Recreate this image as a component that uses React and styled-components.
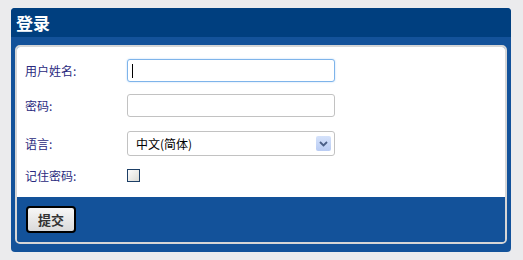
import React from "react";
import styled, { createGlobalStyle } from "styled-components";

const GlobalStyle = createGlobalStyle`
    body {
        margin: 0;
        background-color: #ebebed;
        font-family: "Liberation Sans", "Noto Sans CJK SC", sans-serif;
    }
`;

const Panel = styled.div`
    width: 500px;
    margin: 8px 0 0 11px;
    border-radius: 4px;
    overflow: hidden;
    background-color: #13529a;
`;

const Header = styled.div`
    height: 29px;
    padding-left: 5px;

    display: flex;
    align-items: center;

    background-color: #003f7f;
    color: #fff;

    font-family: "Noto Sans CJK SC", sans-serif;
    font-size: 17px;
    font-weight: bold;
`;

const Body = styled.div`
    padding: 8px 4px 8px 4px;
`;

const Inner = styled.div`
    border: 2px solid #d6d6d6;
    border-radius: 5px;
    overflow: hidden;
`;

const Form = styled.div`
    padding: 6px 0 10px 8px;
    background-color: #fff;
`;

const Row = styled.div`
    height: ${(p) => p.h}px;

    display: flex;
    flex-direction: row;
    align-items: center;
`;

const Label = styled.label`
    width: 102px;

    color: #2a2a80;
    font-family: "Noto Sans CJK SC", sans-serif;
    font-size: 12px;
`;

const Field = styled.div`
    position: relative;
    width: 208px;
    height: 23px;
`;

const Input = styled.input`
    box-sizing: border-box;
    width: 100%;
    height: 100%;

    border: 1px solid ${(p) => (p.$focus ? "#7eb4ea" : "#c2c2c2")};
    border-radius: 3px;
    box-shadow: ${(p) => (p.$focus ? "0 0 2px #b6d6f6" : "none")};
    outline: none;
    padding: 0 6px;
`;

const Caret = styled.span`
    position: absolute;
    left: 5px;
    top: 5px;
    width: 1px;
    height: 14px;
    background-color: #000;
`;

const SelectBox = styled.div`
    position: relative;
    width: 208px;
    height: 25px;
`;

const Select = styled.select`
    box-sizing: border-box;
    width: 100%;
    height: 100%;

    appearance: none;
    border: 1px solid #c2c2c2;
    border-radius: 3px;
    background-color: #fff;
    padding: 0 8px;

    color: #000;
    font-family: "Noto Sans CJK SC", sans-serif;
    font-size: 12px;
`;

const Arrow = styled.span`
    position: absolute;
    right: 4px;
    top: 5px;
    width: 15px;
    height: 15px;

    display: flex;
    justify-content: center;
    align-items: center;

    border-radius: 2px;
    background: linear-gradient(#d5e2fb, #b9ccf3);
    pointer-events: none;
`;

const Check = styled.span`
    box-sizing: border-box;
    width: 13px;
    height: 13px;

    border: 1px solid #1d3f66;
    background: linear-gradient(135deg, #fcfcfc, #dcdcd6);
`;

const Footer = styled.div`
    padding: 9px;
    background-color: #13529a;
`;

const SubmitButton = styled.button`
    width: 50px;
    height: 27px;

    border: 2px solid #000;
    border-radius: 4px;
    background: linear-gradient(#f7f7f7, #dadada);

    color: #333;
    font-family: "Noto Sans CJK SC", sans-serif;
    font-size: 13px;
    font-weight: bold;
`;

const App = () => {
    return (
        <Panel>
            <GlobalStyle />
            <Header>登录</Header>
            <Body>
                <Inner>
                    <Form>
                        <Row h={35}>
                            <Label>用户姓名:</Label>
                            <Field>
                                <Input $focus />
                                <Caret />
                            </Field>
                        </Row>
                        <Row h={35}>
                            <Label>密码:</Label>
                            <Field>
                                <Input type="password" />
                            </Field>
                        </Row>
                        <Row h={41}>
                            <Label>语言:</Label>
                            <SelectBox>
                                <Select defaultValue="zh">
                                    <option value="zh">中文(简体)</option>
                                </Select>
                                <Arrow>
                                    <svg width="9" height="6" viewBox="0 0 9 6">
                                        <path d="M1 1 L4.5 4.5 L8 1" fill="none" stroke="#4a5f86" strokeWidth="1.8" />
                                    </svg>
                                </Arrow>
                            </SelectBox>
                        </Row>
                        <Row h={23}>
                            <Label>记住密码:</Label>
                            <Check />
                        </Row>
                    </Form>
                    <Footer>
                        <SubmitButton>提交</SubmitButton>
                    </Footer>
                </Inner>
            </Body>
        </Panel>
    );
};

export default App;
